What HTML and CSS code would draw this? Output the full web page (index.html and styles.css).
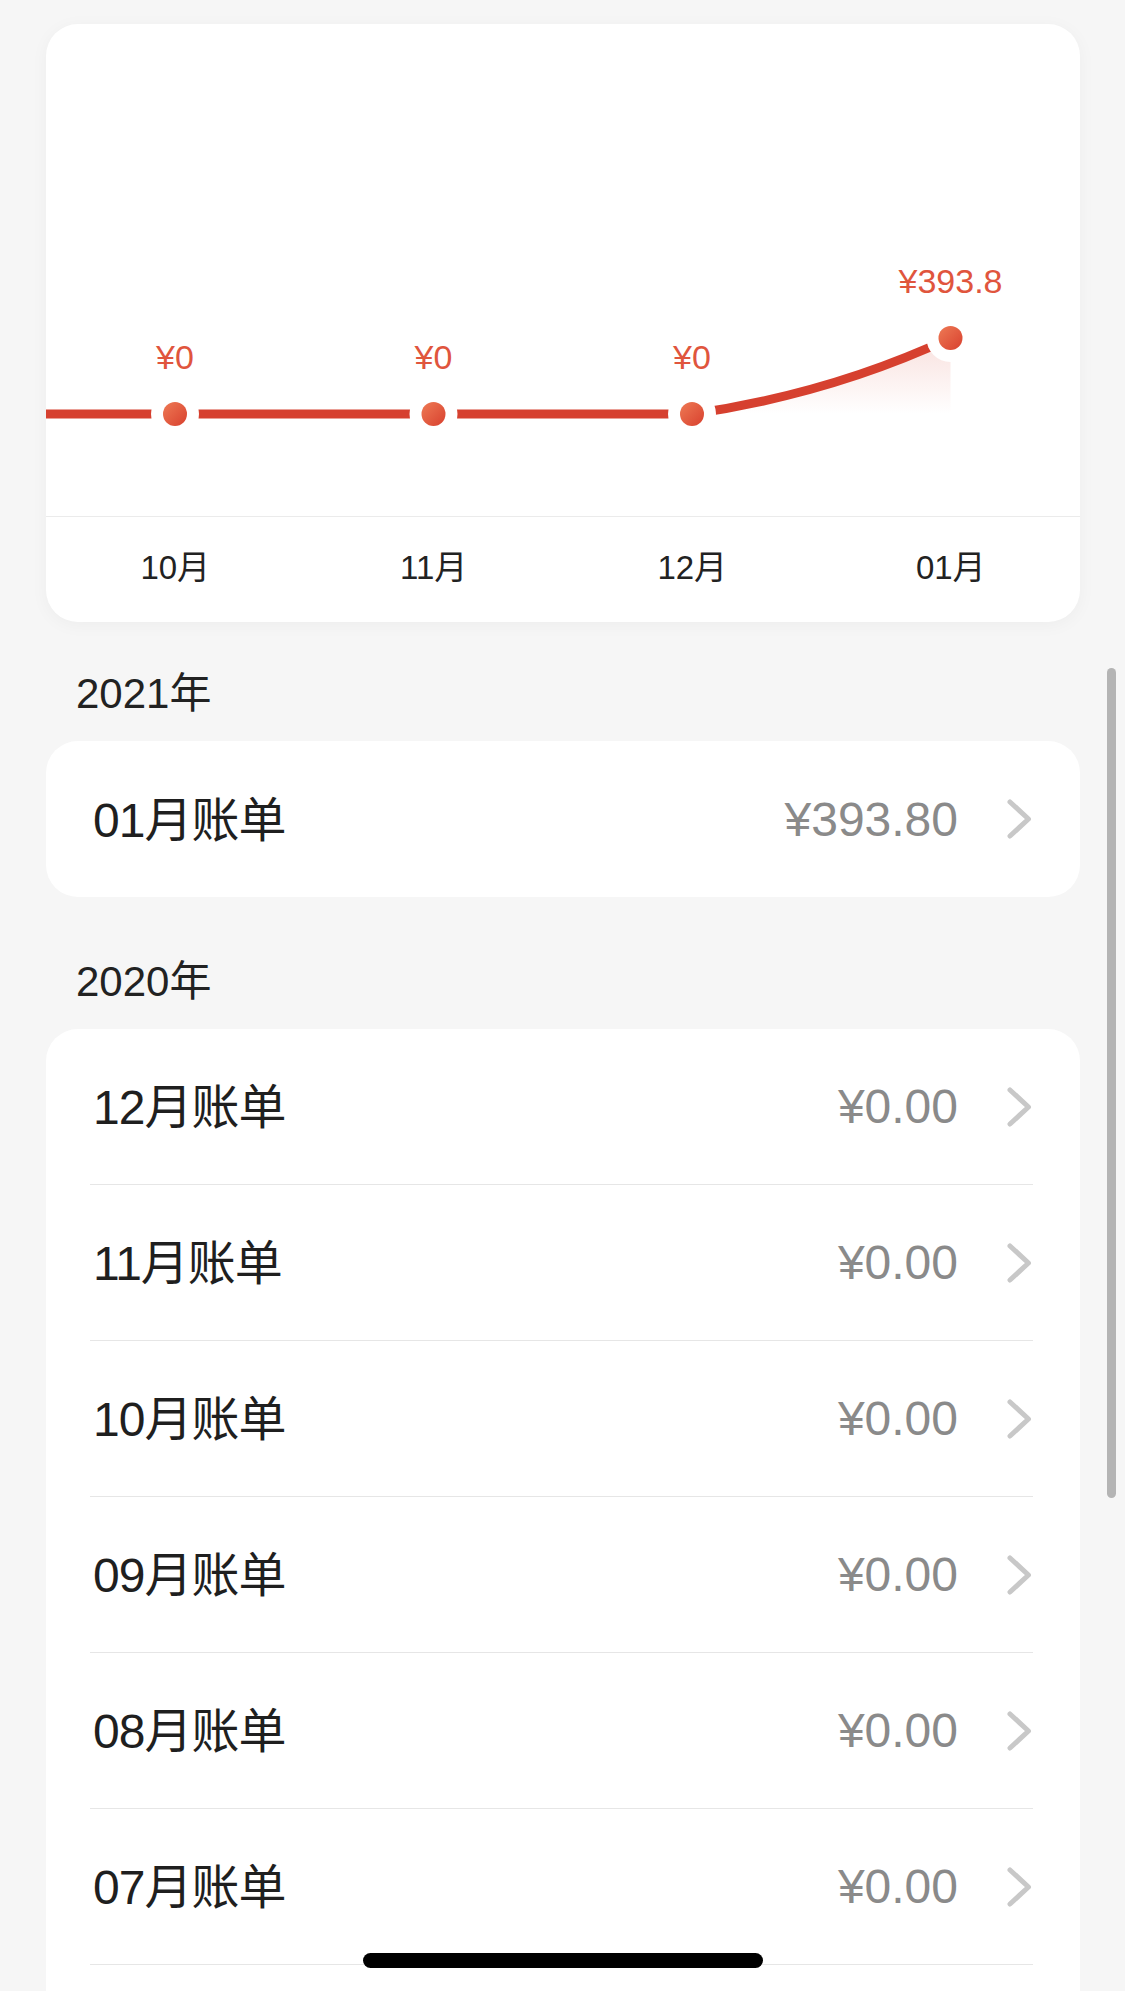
FILE: index.html
```html
<!DOCTYPE html>
<html lang="zh-CN">
<head>
    <meta charset="UTF-8">
    <meta name="viewport" content="width=device-width, initial-scale=1.0">
    <title>月度账单</title>
    <link rel="stylesheet" href="styles.css">
</head>
<body>
    <div class="page">
        <div class="chart-card">
            <svg class="chart" viewBox="0 0 1034 492">
                <defs>
                    <linearGradient id="areaFill" x1="0" y1="0" x2="0" y2="1">
                        <stop offset="0" stop-color="#d6402f" stop-opacity="0.16"/>
                        <stop offset="1" stop-color="#d6402f" stop-opacity="0"/>
                    </linearGradient>
                    <linearGradient id="dotFill" x1="0" y1="0" x2="1" y2="1">
                        <stop offset="0" stop-color="#ee7a55"/>
                        <stop offset="1" stop-color="#d8402e"/>
                    </linearGradient>
                </defs>

                <!-- area under the rising segment -->
                <path class="chart-area" d="M646 390 Q784 370 904.5 314 L904.5 390 Z"/>
                <path class="chart-line" d="M0 390 L646 390 Q784 370 904.5 314"/>

                <!-- points -->
                <circle class="dot-halo" cx="129" cy="390" r="24"/>
                <circle class="dot" cx="129" cy="390" r="12"/>
                <circle class="dot-halo" cx="387.5" cy="390" r="24"/>
                <circle class="dot" cx="387.5" cy="390" r="12"/>
                <circle class="dot-halo" cx="646" cy="390" r="24"/>
                <circle class="dot" cx="646" cy="390" r="12"/>
                <circle class="dot-halo" cx="904.5" cy="314" r="24"/>
                <circle class="dot" cx="904.5" cy="314" r="12"/>

                <text class="point-label" x="129" y="345">¥0</text>
                <text class="point-label" x="387.5" y="345">¥0</text>
                <text class="point-label" x="646" y="345">¥0</text>
                <text class="point-label" x="904.5" y="269">¥393.8</text>
            </svg>
            <div class="months">
                <span>10月</span>
                <span>11月</span>
                <span>12月</span>
                <span>01月</span>
            </div>
        </div>

        <h2 class="year">2021年</h2>
        <div class="bill-card">
            <div class="bill-row">
                <span class="bill-name">01月账单</span>
                <span class="bill-amount">¥393.80</span>
                <svg class="chevron" viewBox="0 0 26 40"><polyline points="3,3 21.5,20 3,37"/></svg>
            </div>
        </div>

        <h2 class="year">2020年</h2>
        <div class="bill-card bill-card-long">
            <div class="bill-row">
                <span class="bill-name">12月账单</span>
                <span class="bill-amount">¥0.00</span>
                <svg class="chevron" viewBox="0 0 26 40"><polyline points="3,3 21.5,20 3,37"/></svg>
            </div>
            <div class="bill-row">
                <span class="bill-name">11月账单</span>
                <span class="bill-amount">¥0.00</span>
                <svg class="chevron" viewBox="0 0 26 40"><polyline points="3,3 21.5,20 3,37"/></svg>
            </div>
            <div class="bill-row">
                <span class="bill-name">10月账单</span>
                <span class="bill-amount">¥0.00</span>
                <svg class="chevron" viewBox="0 0 26 40"><polyline points="3,3 21.5,20 3,37"/></svg>
            </div>
            <div class="bill-row">
                <span class="bill-name">09月账单</span>
                <span class="bill-amount">¥0.00</span>
                <svg class="chevron" viewBox="0 0 26 40"><polyline points="3,3 21.5,20 3,37"/></svg>
            </div>
            <div class="bill-row">
                <span class="bill-name">08月账单</span>
                <span class="bill-amount">¥0.00</span>
                <svg class="chevron" viewBox="0 0 26 40"><polyline points="3,3 21.5,20 3,37"/></svg>
            </div>
            <div class="bill-row">
                <span class="bill-name">07月账单</span>
                <span class="bill-amount">¥0.00</span>
                <svg class="chevron" viewBox="0 0 26 40"><polyline points="3,3 21.5,20 3,37"/></svg>
            </div>
        </div>
    </div>

    <div class="scrollbar"></div>
    <div class="home-bar"></div>
</body>
</html>
```

FILE: styles.css
```css
body {
    margin: 0;
    background-color: #f6f6f6;
    color: #1f1f1f;
    font-family: "Liberation Sans", "Noto Sans CJK SC", sans-serif;
}

.page {
    height: 100vh;
    overflow: hidden;
    box-sizing: border-box;
    padding: 24px 45px 0 46px;
}

.chart-card {
    background-color: #ffffff;
    border-radius: 32px;
    box-shadow: 0 3px 18px rgba(0, 0, 0, 0.04);
    overflow: hidden;
    margin-bottom: 25px;
}

.chart {
    display: block;
    width: 100%;
    height: 492px;
}

.chart-area {
    fill: url(#areaFill);
}

.chart-line {
    fill: none;
    stroke: #d6402f;
    stroke-width: 9;
}

.dot-halo {
    fill: #ffffff;
}

.dot {
    fill: url(#dotFill);
}

.point-label {
    fill: #e0553d;
    font-family: "Liberation Sans", "Noto Sans CJK SC", sans-serif;
    font-size: 34px;
    text-anchor: middle;
}

.months {
    display: grid;
    grid-template-columns: repeat(4, 1fr);
    align-items: center;
    height: 106px;
    box-sizing: border-box;
    padding-bottom: 10px;
    border-top: 1px solid #ebebeb;
    font-size: 33px;
    color: #222222;
    text-align: center;
}

.year {
    margin: 0;
    padding-left: 30px;
    height: 94px;
    line-height: 94px;
    font-size: 42px;
    font-weight: normal;
    color: #222222;
}

.bill-card {
    background-color: #ffffff;
    border-radius: 32px;
    overflow: hidden;
    margin-bottom: 38px;
}

.bill-card-long {
    padding-bottom: 80px;
}

.bill-row {
    display: flex;
    align-items: center;
    height: 156px;
    box-sizing: border-box;
    margin: 0 47px 0 44px;
    padding-left: 3px;
    border-bottom: 1px solid #e6e6e6;
}

.bill-card:not(.bill-card-long) .bill-row:last-child {
    border-bottom: none;
}

.bill-name {
    padding-bottom: 7px;
    font-size: 48px;
    letter-spacing: -1px;
    color: #1f1f1f;
}

.bill-amount {
    margin-left: auto;
    font-size: 48px;
    color: #8a8a8a;
}

.chevron {
    width: 26px;
    height: 40px;
    margin-left: 49px;
}

.chevron polyline {
    fill: none;
    stroke: #c8c8c8;
    stroke-width: 5;
    stroke-linecap: round;
    stroke-linejoin: round;
}

.scrollbar {
    position: fixed;
    left: 1107px;
    top: 668px;
    width: 9px;
    height: 830px;
    border-radius: 5px;
    background-color: #b4b4b4;
}

.home-bar {
    position: fixed;
    left: 363px;
    bottom: 23px;
    width: 400px;
    height: 15px;
    border-radius: 8px;
    background-color: #000000;
}
```
